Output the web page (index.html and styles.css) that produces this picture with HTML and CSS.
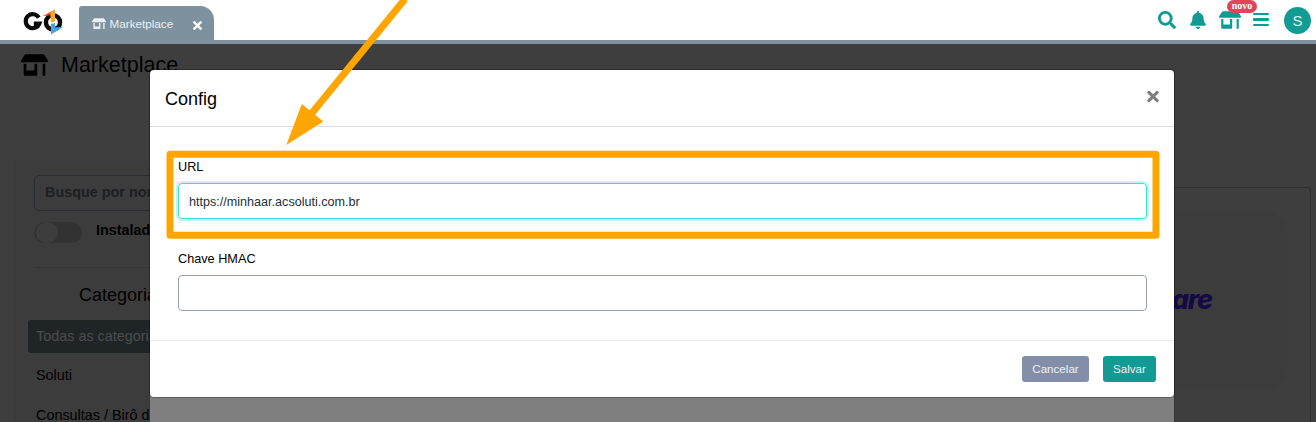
FILE: index.html
```html
<!DOCTYPE html>
<html lang="pt-BR">
<head>
<meta charset="utf-8">
<title>Marketplace</title>
<link rel="stylesheet" href="styles.css">
</head>
<body>
<svg width="0" height="0" class="defs">
  <symbol id="store" viewBox="0 0 640 512"><path d="M320 384H128V224H64v256c0 17.700 14.300 32 32 32h256c17.700 0 32-14.300 32-32V224h-64v160zm314.600-241.800l-85.300-128c-6-8.900-16-14.200-26.700-14.200H117.400c-10.700 0-20.700 5.300-26.600 14.200l-85.300 128c-14.200 21.300 1 49.800 26.600 49.800H608c25.500 0 40.700-28.500 26.600-49.800zM512 496c0 8.800 7.200 16 16 16h32c8.800 0 16-7.200 16-16V224h-64v272z"/></symbol>
  <symbol id="times" viewBox="0 0 352 512"><path d="M242.720 256l100.070-100.070c12.280-12.280 12.280-32.190 0-44.480l-22.240-22.240c-12.280-12.280-32.190-12.280-44.480 0L176 189.280 75.930 89.210c-12.280-12.280-32.190-12.280-44.480 0L9.210 111.450c-12.280 12.280-12.280 32.190 0 44.480L109.280 256 9.210 356.070c-12.280 12.280-12.280 32.190 0 44.480l22.240 22.240c12.280 12.280 32.200 12.280 44.480 0L176 322.720l100.070 100.070c12.280 12.280 32.200 12.280 44.480 0l22.240-22.240c12.280-12.280 12.280-32.190 0-44.480L242.720 256z"/></symbol>
</svg>

<header class="topbar">
  <svg class="logo" viewBox="0 0 44 28" width="44" height="28">
    <path d="M16.800 9.600A7 7 0 1 0 17.300 15.700H11.800" fill="none" stroke="#0a0a0a" stroke-width="4.200"/>
    <circle cx="31" cy="14.300" r="7.100" fill="none" stroke="#0a0a0a" stroke-width="4.400"/>
    <path d="M20.500 8.300L33 1.500V6.500z" fill="#e8431f"/>
    <path d="M28.300 4.500L33 1.500V13.500L28.800 14.500z" fill="#f9a825"/>
    <path d="M29 16L33 15V19.500L41.500 18.800 29 26.500z" fill="#4aa3ea"/>
  </svg>
  <div class="tab">
    <svg class="tab-icon"><use href="#store"/></svg>
    <span class="tab-label">Marketplace</span>
    <svg class="tab-close"><use href="#times"/></svg>
  </div>
  <nav class="actions">
    <svg class="search" viewBox="0 0 512 512"><path d="M505 442.700L405.300 343c-4.500-4.500-10.600-7-17-7H372c27.600-35.300 44-79.700 44-128C416 93.100 322.900 0 208 0S0 93.100 0 208s93.100 208 208 208c48.300 0 92.700-16.400 128-44v16.300c0 6.400 2.500 12.500 7 17l99.700 99.700c9.400 9.400 24.600 9.400 33.900 0l28.300-28.300c9.400-9.400 9.400-24.600.1-34zM208 336c-70.700 0-128-57.200-128-128 0-70.700 57.200-128 128-128 70.700 0 128 57.200 128 128 0 70.700-57.200 128-128 128z"/></svg>
    <svg class="bell" viewBox="0 0 448 512"><path d="M224 512c35.320 0 63.970-28.650 63.970-64H160.030c0 35.350 28.650 64 63.970 64zm215.390-149.710c-19.320-20.760-55.470-51.990-55.470-154.290 0-77.700-54.480-139.900-127.940-155.160V32c0-17.670-14.320-32-31.980-32s-31.980 14.330-31.980 32v20.840C118.560 68.100 64.080 130.300 64.080 208c0 102.300-36.150 133.530-55.470 154.290-6 6.450-8.660 14.160-8.610 21.710.11 16.400 12.980 32 32.100 32h383.800c19.120 0 32-15.600 32.100-32 .05-7.550-2.610-15.270-8.610-21.710z"/></svg>
    <div class="shop"><svg class="shop-icon"><use href="#store"/></svg><span class="badge">novo</span></div>
    <div class="bars"><i></i><i></i><i></i></div>
    <div class="avatar">S</div>
  </nav>
</header>

<main class="page">
  <h1 class="title"><svg class="title-icon"><use href="#store"/></svg>Marketplace</h1>
  <div class="columns">
    <aside class="sidebar">
      <div class="filter">Busque por nome</div>
      <div class="switch-row"><span class="switch"></span><b>Instalados</b></div>
      <h2 class="cat-title">Categorias</h2>
      <ul class="cats">
        <li class="cat active">Todas as categorias</li>
        <li class="cat">Soluti</li>
        <li class="cat">Consultas / Birô de crédito</li>
      </ul>
    </aside>
    <section class="results"><div class="card"><span class="brand">are</span></div></section>
  </div>
</main>

<div class="dialog-wrap">
  <div class="dialog">
    <div class="dialog-head"><span>Config</span><svg class="dialog-close"><use href="#times"/></svg></div>
    <div class="dialog-body">
      <label class="label">URL</label>
      <div class="input focused">https://minhaar.acsoluti.com.br</div>
      <label class="label second">Chave HMAC</label>
      <div class="input"></div>
    </div>
    <div class="dialog-foot"><button class="btn cancel">Cancelar</button><button class="btn save">Salvar</button></div>
  </div>
</div>

<svg class="callout" width="1316" height="422">
  <rect x="170" y="154.200" width="986" height="81" fill="none" stroke="#ffa500" stroke-width="7" stroke-linejoin="round"/>
  <path d="M405 -1L312 113" stroke="#ffa500" stroke-width="7"/>
  <path d="M286.300 145L301.800 104 323.300 121.500z" fill="#ffa500"/>
</svg>
</body>
</html>
```

FILE: styles.css
```css
* { box-sizing: border-box; }
body { margin: 0; width: 1316px; height: 422px; overflow: hidden; position: relative; background: #3e3e3e; font-family: "Liberation Sans", Arial, sans-serif; color: #000; }
.defs { position: absolute; }
svg { fill: currentColor; flex: none; }

.topbar { height: 44px; background: #fff; border-bottom: 4px solid #7d929e; display: flex; align-items: flex-end; padding-left: 22px; }
.logo { margin-bottom: 4px; }
.tab { width: 135px; height: 34px; margin-left: 13px; padding: 1px 12px 0 13px; background: #7d929e; border-radius: 3px 14px 0 0; color: #eceff1; display: flex; align-items: center; font-size: 11.7px; }
.tab-icon { width: 14px; height: 11.500px; }
.tab-label { margin-left: 3.500px; flex: 1; }
.tab-close { width: 9px; height: 13px; color: #fff; margin-top: 4px; }
.actions { margin-left: auto; height: 40px; padding-right: 5px; display: flex; align-items: center; color: #129b93; }
.search { width: 18px; height: 18px; margin: -1px 14px 0 0; }
.bell { width: 16px; height: 18px; margin: -1px 13px 0 0; }
.shop { position: relative; width: 22px; height: 18px; margin: -1px 12px 0 0; }
.shop-icon { width: 22px; height: 18px; display: block; }
.badge { position: absolute; left: 8px; top: -11px; width: 30px; height: 13px; border-radius: 6.500px; background: #e2445c; color: #fff; font: bold 10px/12px "Liberation Serif", serif; text-align: center; }
.bars { width: 16px; margin: -1px 15px 0 0; display: grid; gap: 3px; }
.bars i { height: 2.600px; border-radius: 1px; background: currentColor; }
.avatar { width: 27px; height: 27px; border-radius: 50%; background: #129b93; color: #e4f4f2; font-size: 15px; line-height: 28px; text-align: center; }

.page { height: 378px; overflow: hidden; }
.title { margin: 0; height: 42px; padding-left: 21px; display: flex; align-items: center; font-size: 21.500px; font-weight: 400; }
.title-icon { width: 27px; height: 22px; margin: -1px 13px 0 0; }
.columns { display: flex; padding: 74px 5px 0 14px; }
.sidebar { width: 300px; height: 262px; background: #3c3c3c; padding: 15px 14px 0; font-size: 14.400px; }
.filter { margin-left: 6px; height: 36px; border: 1px solid #292c32; border-radius: 5px; padding-left: 10px; line-height: 33px; font-weight: 700; color: #1c1f22; }
.switch-row { margin: 11px 0 0 6px; padding-bottom: 24.500px; border-bottom: 1px solid #363636; display: flex; height: 46px; gap: 14px; line-height: 16px; }
.switch { flex: none; width: 48px; height: 21px; border-radius: 11px; background: #323232; padding: 0 2px; }
.switch::before { content: ""; display: block; width: 22px; height: 21px; border-radius: 50%; background: #3d3d3d; }
.cat-title { margin: 0; padding-top: 17px; height: 52px; font-size: 18px; line-height: 20px; font-weight: 400; text-align: center; padding-right: 83px; }
.cats { list-style: none; margin: 0; padding: 0; }
.cat { height: 33px; line-height: 32px; margin-bottom: 6px; padding-left: 8px; border-radius: 3px; white-space: nowrap; }
.cat + .cat + .cat { margin-top: 7px; }
.cat.active { background: #1f2427; color: #4b4d4e; }
.results { flex: 1; margin: 27px 0 0 20px; height: 235px; border: 1px solid #303030; border-bottom: 0; border-radius: 4px 4px 0 0; padding: 22px; display: flex; justify-content: flex-end; }
.card { width: 400px; height: 180px; border-radius: 26px; background: #3c3c3c; display: flex; justify-content: flex-end; align-items: center; padding-right: 76px; }
.brand { font: italic 800 27px Inter, sans-serif; letter-spacing: -1.200px; color: #150a45; margin-top: -2px; }

.dialog-wrap { position: absolute; left: 150px; top: 70px; width: 1024px; height: 352px; background: linear-gradient(transparent 20px, #7f7f7f 20px); box-shadow: 0 0 1px #222; }
.dialog { height: 327px; background: #fff; border-radius: 4px; box-shadow: 0 0 0 1px rgba(0,0,0,.25); }
.dialog-head { height: 57px; border-bottom: 1px solid #dcdee6; padding: 2px 15px 0; display: flex; justify-content: space-between; align-items: center; font-size: 18px; }
.dialog-close { width: 12px; height: 17px; margin-top: -6px; color: #7f7f7f; }
.dialog-body { height: 213px; padding: 32px 27.500px 0 28px; font-size: 12.700px; }
.label { display: block; height: 24px; line-height: 16px; }
.label.second { margin-top: 32px; }
.input { height: 36px; border: 1px solid #98a0b6; border-radius: 4px; padding-left: 10px; line-height: 36px; color: #22313c; font-size: 12.600px; }
.input.focused { border-color: #3bddd0; box-shadow: 0 0 0 2px #c3f5f0; }
.dialog-foot { height: 57px; border-top: 1px solid #ebedef; display: flex; justify-content: flex-end; align-items: center; gap: 14px; padding-right: 18px; }
.btn { border: 0; border-radius: 3px; height: 26px; padding: 0 0 2px; font: 11.600px "Liberation Sans", Arial, sans-serif; color: #eef1f5; }
.cancel { width: 67px; background: #838fa8; }
.save { width: 53px; background: #129b93; }
.callout { position: absolute; left: 0; top: 0; pointer-events: none; }
```
